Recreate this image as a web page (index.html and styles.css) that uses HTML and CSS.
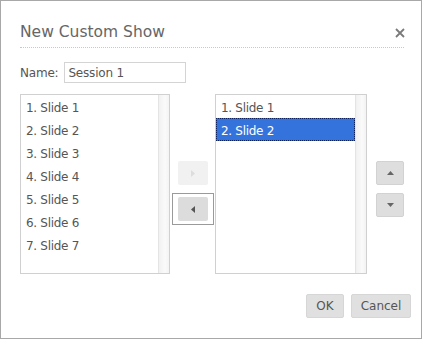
FILE: index.html
```html
<!DOCTYPE html>
<html lang="en">
<head>
  <meta charset="UTF-8">
  <title>New Custom Show</title>
  <link rel="stylesheet" href="styles.css">
</head>
<body>
  <div class="dialog">
    <div class="header">
      <span class="title">New Custom Show</span>
      <span class="close">
        <svg width="10" height="10" viewBox="0 0 10 10"><path d="M1 1L9 9M9 1L1 9" stroke="#7a7a7a" stroke-width="1.8"/></svg>
      </span>
    </div>

    <div class="name-row">
      <label for="name">Name:</label>
      <input type="text" id="name" class="name-input" value="Session 1">
    </div>

    <div class="lists">
      <!-- all slides -->
      <div class="list list-left">
        <div class="items">
          <div class="item">1. Slide 1</div>
          <div class="item">2. Slide 2</div>
          <div class="item">3. Slide 3</div>
          <div class="item">4. Slide 4</div>
          <div class="item">5. Slide 5</div>
          <div class="item">6. Slide 6</div>
          <div class="item">7. Slide 7</div>
        </div>
        <div class="track"></div>
      </div>

      <div class="move">
        <button class="arrow disabled">
          <svg width="4" height="7" viewBox="0 0 4 7"><path d="M0 0L4 3.5L0 7Z" fill="#ddd"/></svg>
        </button>
        <span class="focus">
          <button class="arrow">
            <svg width="4" height="7" viewBox="0 0 4 7"><path d="M4 0L0 3.5L4 7Z" fill="#555"/></svg>
          </button>
        </span>
      </div>

      <!-- slides in the show -->
      <div class="list list-right">
        <div class="items">
          <div class="item">1. Slide 1</div>
          <div class="item selected">2. Slide 2</div>
        </div>
        <div class="track"></div>
      </div>

      <div class="order">
        <button class="small">
          <svg width="7" height="4" viewBox="0 0 7 4"><path d="M0 4L3.5 0L7 4Z" fill="#666"/></svg>
        </button>
        <button class="small">
          <svg width="7" height="4" viewBox="0 0 7 4"><path d="M0 0L3.5 4L7 0Z" fill="#666"/></svg>
        </button>
      </div>
    </div>

    <div class="footer">
      <button class="btn ok">OK</button>
      <button class="btn cancel">Cancel</button>
    </div>
  </div>
</body>
</html>
```

FILE: styles.css
```css
body {
  margin: 0;
  font-family: "DejaVu Sans", Verdana, sans-serif;
  font-size: 12px;
  color: #555;
  background-color: #fff;
}

.dialog {
  width: 422px;
  height: 339px;
  box-sizing: border-box;
  border: 1px solid #a8a8a8;
  padding: 0 10px 0 19px;
  background-color: #fff;
}

.header {
  display: flex;
  justify-content: space-between;
  align-items: center;
  margin-right: 7px;
  padding: 21px 0 5px;
  line-height: 20px;
  border-bottom: 1px dotted #c8c8c8;
}

.title {
  font-size: 15.5px;
  color: #666;
}

.close {
  display: flex;
  margin-right: -1px;
  padding-top: 1px;
}

.name-row {
  display: flex;
  align-items: center;
  gap: 6px;
  margin-top: 14px;
  letter-spacing: -0.2px;
}

.name-input {
  width: 122px;
  height: 21px;
  box-sizing: border-box;
  border: 1px solid #d4d4d4;
  padding: 0 3px;
  font-family: inherit;
  font-size: 12px;
  letter-spacing: -0.2px;
  color: #555;
}

.lists {
  display: flex;
  margin-top: 11px;
}

.list {
  display: flex;
  height: 180px;
  box-sizing: border-box;
  border: 1px solid #d0d0d0;
}

.list-left {
  width: 150px;
}

.list-right {
  width: 152px;
}

.items {
  flex: 1;
}

.item {
  height: 23px;
  box-sizing: border-box;
  padding: 3px 0 0 5px;
  line-height: 20px;
  letter-spacing: -0.3px;
  white-space: nowrap;
}

.item.selected {
  background-color: #3573dc;
  color: #fff;
  outline: 1px dotted #0b1f5c;
  outline-offset: -1px;
}

.track {
  width: 10px;
  border-left: 1px solid #e4e4e4;
  background: linear-gradient(to right, #f1f1f1, #fafafa 60%, #f3f3f3);
}

.move {
  width: 45px;
  display: flex;
  flex-direction: column;
  align-items: center;
  gap: 8px;
  padding-top: 67px;
}

.focus {
  display: block;
  padding: 3px 5px;
  border: 1px solid #9a9a9a;
}

button {
  border: none;
  border-radius: 2px;
  cursor: pointer;
  padding: 0;
  display: flex;
  align-items: center;
  justify-content: center;
}

.arrow {
  width: 30px;
  height: 24px;
  background-color: #dcdcdc;
}

.arrow.disabled {
  background-color: #f1f1f1;
}

.order {
  display: flex;
  flex-direction: column;
  gap: 8px;
  margin-left: 9px;
  padding-top: 67px;
}

.small {
  width: 28px;
  height: 24px;
  background-color: #dedede;
  border: 1px solid #d2d2d2;
  box-sizing: border-box;
}

.footer {
  display: flex;
  justify-content: flex-end;
  gap: 7px;
  margin-top: 20px;
}

.btn {
  height: 24px;
  background-color: #e0e0e0;
  border: 1px solid #d6d6d6;
  box-sizing: border-box;
  font-family: inherit;
  font-size: 12px;
  color: #555;
}

.ok {
  width: 38px;
}

.cancel {
  width: 60px;
}
```
